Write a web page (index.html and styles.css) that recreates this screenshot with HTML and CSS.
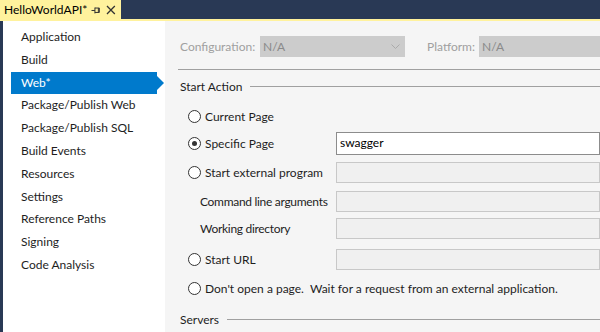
FILE: index.html
```html
<!DOCTYPE html>
<html lang="en">
<head>
    <meta charset="UTF-8">
    <title>HelloWorldAPI</title>
    <link rel="stylesheet" href="styles.css">
</head>
<body>
    <div class="tabbar">
        <div class="tab">
            <span class="tab-title">HelloWorldAPI*</span>
            <svg class="tab-icon" width="10" height="10" viewBox="0 0 10 10">
                <path d="M0.5 5.5H4M4 2.5V8.5M4 3H8.5V7.5H4M7.5 3V7.5" stroke="#333" fill="none"/>
            </svg>
            <svg class="tab-icon" width="10" height="10" viewBox="0 0 10 10">
                <path d="M1 1L9 9M9 1L1 9" stroke="#333" stroke-width="1.3" fill="none"/>
            </svg>
        </div>
    </div>
    <div class="tabline"></div>

    <div class="main">
        <ul class="nav">
            <li>Application</li>
            <li>Build</li>
            <li class="active">Web*</li>
            <li>Package/Publish Web</li>
            <li>Package/Publish SQL</li>
            <li>Build Events</li>
            <li>Resources</li>
            <li>Settings</li>
            <li>Reference Paths</li>
            <li>Signing</li>
            <li>Code Analysis</li>
        </ul>

        <div class="content">
            <div class="config-row">
                <span class="dim-label">Configuration:</span>
                <div class="combo combo-config">N/A
                    <svg width="9" height="6" viewBox="0 0 9 6"><path d="M0.5 0.5L4.5 4.5L8.5 0.5" stroke="#aaa" fill="none"/></svg>
                </div>
                <span class="dim-label platform-label">Platform:</span>
                <div class="combo combo-platform">N/A</div>
            </div>
            <div class="rule"></div>

            <div class="section-head">
                <span>Start Action</span>
                <div class="head-line"></div>
            </div>

            <div class="options">
                <div class="opt">
                    <label class="radio"><span class="circle"></span>Current Page</label>
                </div>
                <div class="opt">
                    <label class="radio"><span class="circle checked"></span>Specific Page</label>
                    <div class="field field-on">swagger</div>
                </div>
                <div class="opt">
                    <label class="radio"><span class="circle"></span>Start external program</label>
                    <div class="field"></div>
                </div>
                <div class="opt">
                    <label class="plain">Command line arguments</label>
                    <div class="field"></div>
                </div>
                <div class="opt opt-short">
                    <label class="plain">Working directory</label>
                    <div class="field"></div>
                </div>
                <div class="opt">
                    <label class="radio"><span class="circle"></span>Start URL</label>
                    <div class="field"></div>
                </div>
                <div class="opt">
                    <label class="radio wide"><span class="circle"></span>Don't open a page.&nbsp; Wait for a request from an external application.</label>
                </div>
            </div>

            <div class="section-head servers">
                <span>Servers</span>
                <div class="head-line"></div>
            </div>
        </div>
    </div>
</body>
</html>
```

FILE: styles.css
```css
*{
    margin: 0;
    padding: 0;
    box-sizing: border-box;
}

body{
    width: 600px;
    height: 332px;
    overflow: hidden;
    font-family: "Lato", "Noto Sans", sans-serif;
    font-size: 12px;
    color: #1e1e1e;
    background-color: #293955;
}

.tabbar{
    height: 19px;
    background-color: #293955;
    display: flex;
}

.tab{
    width: 121px;
    height: 19px;
    background-color: #fff29d;
    display: flex;
    align-items: center;
    padding-left: 4px;
    color: #000;
    font-size: 12px;
}

.tab-title{
    width: 89px;
}

.tab-icon{
    margin-right: 5px;
}

.tabline{
    height: 2px;
    background-color: #fff29d;
}

.main{
    display: flex;
    height: 311px;
    margin-left: 3px;
    background-color: #f5f5f5;
}

.nav{
    list-style-type: none;
    width: 162px;
    background-color: #fff;
    padding-top: 5px;
    padding-left: 8px;
}

.nav li{
    height: 22.8px;
    line-height: 22px;
    padding-left: 10px;
    width: 146px;
    position: relative;
}

.nav li.active{
    background-color: #007acc;
    color: #fff;
}

.nav li.active::after{
    content: "";
    position: absolute;
    right: -7px;
    top: 4px;
    border-left: 7px solid #007acc;
    border-top: 7px solid transparent;
    border-bottom: 7px solid transparent;
}

.content{
    flex: 1;
    padding-left: 13px;
    padding-top: 15px;
}

.config-row{
    display: flex;
    align-items: center;
    height: 21px;
}

.dim-label{
    color: #a0a0a0;
    width: 82px;
    padding-left: 2px;
}

.platform-label{
    width: 54px;
    margin-left: 20px;
}

.combo{
    height: 21px;
    background-color: #cccccc;
    color: #8a8a8a;
    padding-left: 3px;
    line-height: 20px;
    display: flex;
    align-items: center;
    justify-content: space-between;
    padding-right: 5px;
}

.combo-config{
    width: 145px;
}

.combo-platform{
    flex: 1;
}

.rule{
    margin-top: 12px;
    height: 1px;
    background-color: #a0a0a0;
}

.section-head{
    display: flex;
    align-items: center;
    margin-top: 8px;
    padding-left: 2px;
    height: 16px;
}

.head-line{
    flex: 1;
    height: 1px;
    background-color: #a0a0a0;
    margin-left: 8px;
}

.options{
    padding-top: 9px;
    padding-left: 10px;
}

.opt{
    display: flex;
    align-items: center;
    height: 29px;
}

.opt:first-child{
    height: 26px;
}

.opt-short{
    padding-bottom: 4px;
}

.radio{
    display: flex;
    align-items: center;
    width: 148px;
}

.radio.wide{
    width: auto;
}

.circle{
    width: 13px;
    height: 13px;
    border: 1px solid #333;
    border-radius: 50%;
    background-color: #fff;
    margin-right: 4px;
    position: relative;
}

.circle.checked::after{
    content: "";
    position: absolute;
    left: 3px;
    top: 3px;
    width: 5px;
    height: 5px;
    border-radius: 50%;
    background-color: #333;
}

.plain{
    width: 148px;
    padding-left: 12px;
    white-space: nowrap;
    letter-spacing: -0.3px;
}

.field{
    flex: 1;
    height: 21px;
    background-color: #f0f0f0;
    border: 1px solid #c8c8c8;
}

.field-on{
    height: 23px;
    background-color: #fff;
    border: 1px solid #8c8c8c;
    padding-left: 3px;
    line-height: 20px;
    color: #000;
}

.servers{
    margin-top: 8px;
}
```
